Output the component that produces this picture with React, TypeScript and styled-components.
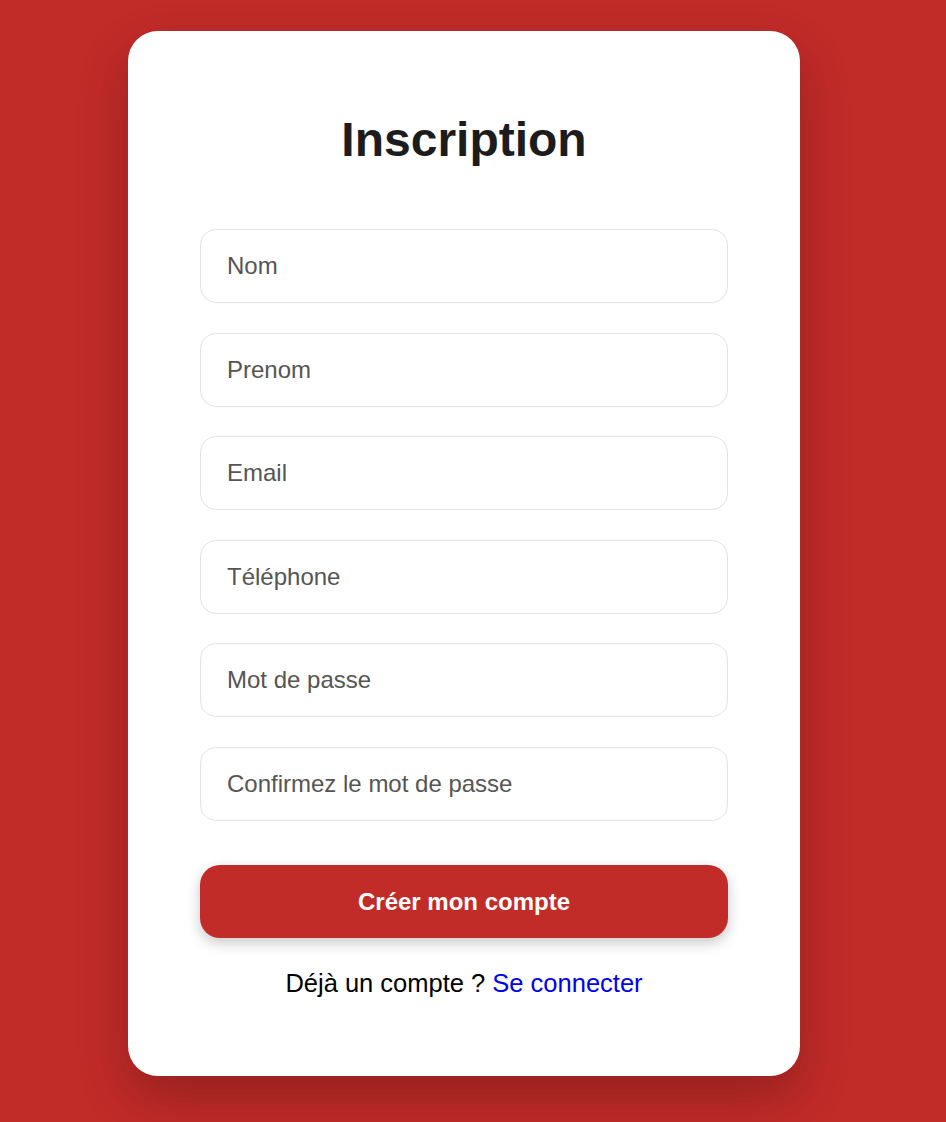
import { createGlobalStyle, styled } from "styled-components";

const GlobalStyle = createGlobalStyle`
  html, body {
    margin: 0;
    padding: 0;
    background: #c12b28;
    font-family: "Liberation Sans", Arial, Helvetica, sans-serif;
  }
`;

const Page = styled.div`
  min-height: 1122px;
  box-sizing: border-box;
  display: flex;
  justify-content: center;
  align-items: flex-start;
  padding: 31px 18px 31px 0;
`;

const Card = styled.div`
  width: 672px;
  box-sizing: border-box;
  background: #ffffff;
  border-radius: 30px;
  padding: 81px 72px 77px;
  box-shadow: 0 22px 50px rgba(0, 0, 0, 0.22);
`;

const Title = styled.h1`
  margin: 0 0 61px;
  text-align: center;
  font-size: 48px;
  line-height: 56px;
  font-weight: 700;
  color: #1c1c1c;
`;

const Form = styled.form`
  display: flex;
  flex-direction: column;
  gap: 29.5px;
`;

const Field = styled.input`
  height: 74px;
  box-sizing: border-box;
  width: 100%;
  border: 1px solid #e3e3e3;
  border-radius: 16px;
  padding: 0 26px;
  font-family: inherit;
  font-size: 24px;
  color: #222;
  background: #fff;
  outline: none;

  &::placeholder {
    color: #555555;
  }
`;

const SubmitButton = styled.button`
  margin-top: 15px;
  height: 73px;
  border: none;
  border-radius: 20px;
  background: #c12b28;
  color: #ffffff;
  font-family: inherit;
  font-size: 24px;
  font-weight: 700;
  cursor: pointer;
  box-shadow: 0 5px 14px rgba(0, 0, 0, 0.22);
`;

const Footer = styled.p`
  margin: 29px 0 0;
  text-align: center;
  font-size: 25.5px;
  line-height: 32px;
  color: #000;
`;

const Link = styled.a`
  color: #0000ee;
  text-decoration: none;
`;

const fields = [
  { type: "text", placeholder: "Nom" },
  { type: "text", placeholder: "Prenom" },
  { type: "email", placeholder: "Email" },
  { type: "tel", placeholder: "Téléphone" },
  { type: "password", placeholder: "Mot de passe" },
  { type: "password", placeholder: "Confirmez le mot de passe" },
];

export default function App() {
  return (
    <>
      <GlobalStyle />
      <Page>
        <Card>
          <Title>Inscription</Title>
          <Form onSubmit={(e) => e.preventDefault()}>
            {fields.map((f) => (
              <Field key={f.placeholder} type={f.type} placeholder={f.placeholder} />
            ))}
            <SubmitButton type="submit">Créer mon compte</SubmitButton>
          </Form>
          <Footer>
            Déjà un compte ? <Link href="#">Se connecter</Link>
          </Footer>
        </Card>
      </Page>
    </>
  );
}
